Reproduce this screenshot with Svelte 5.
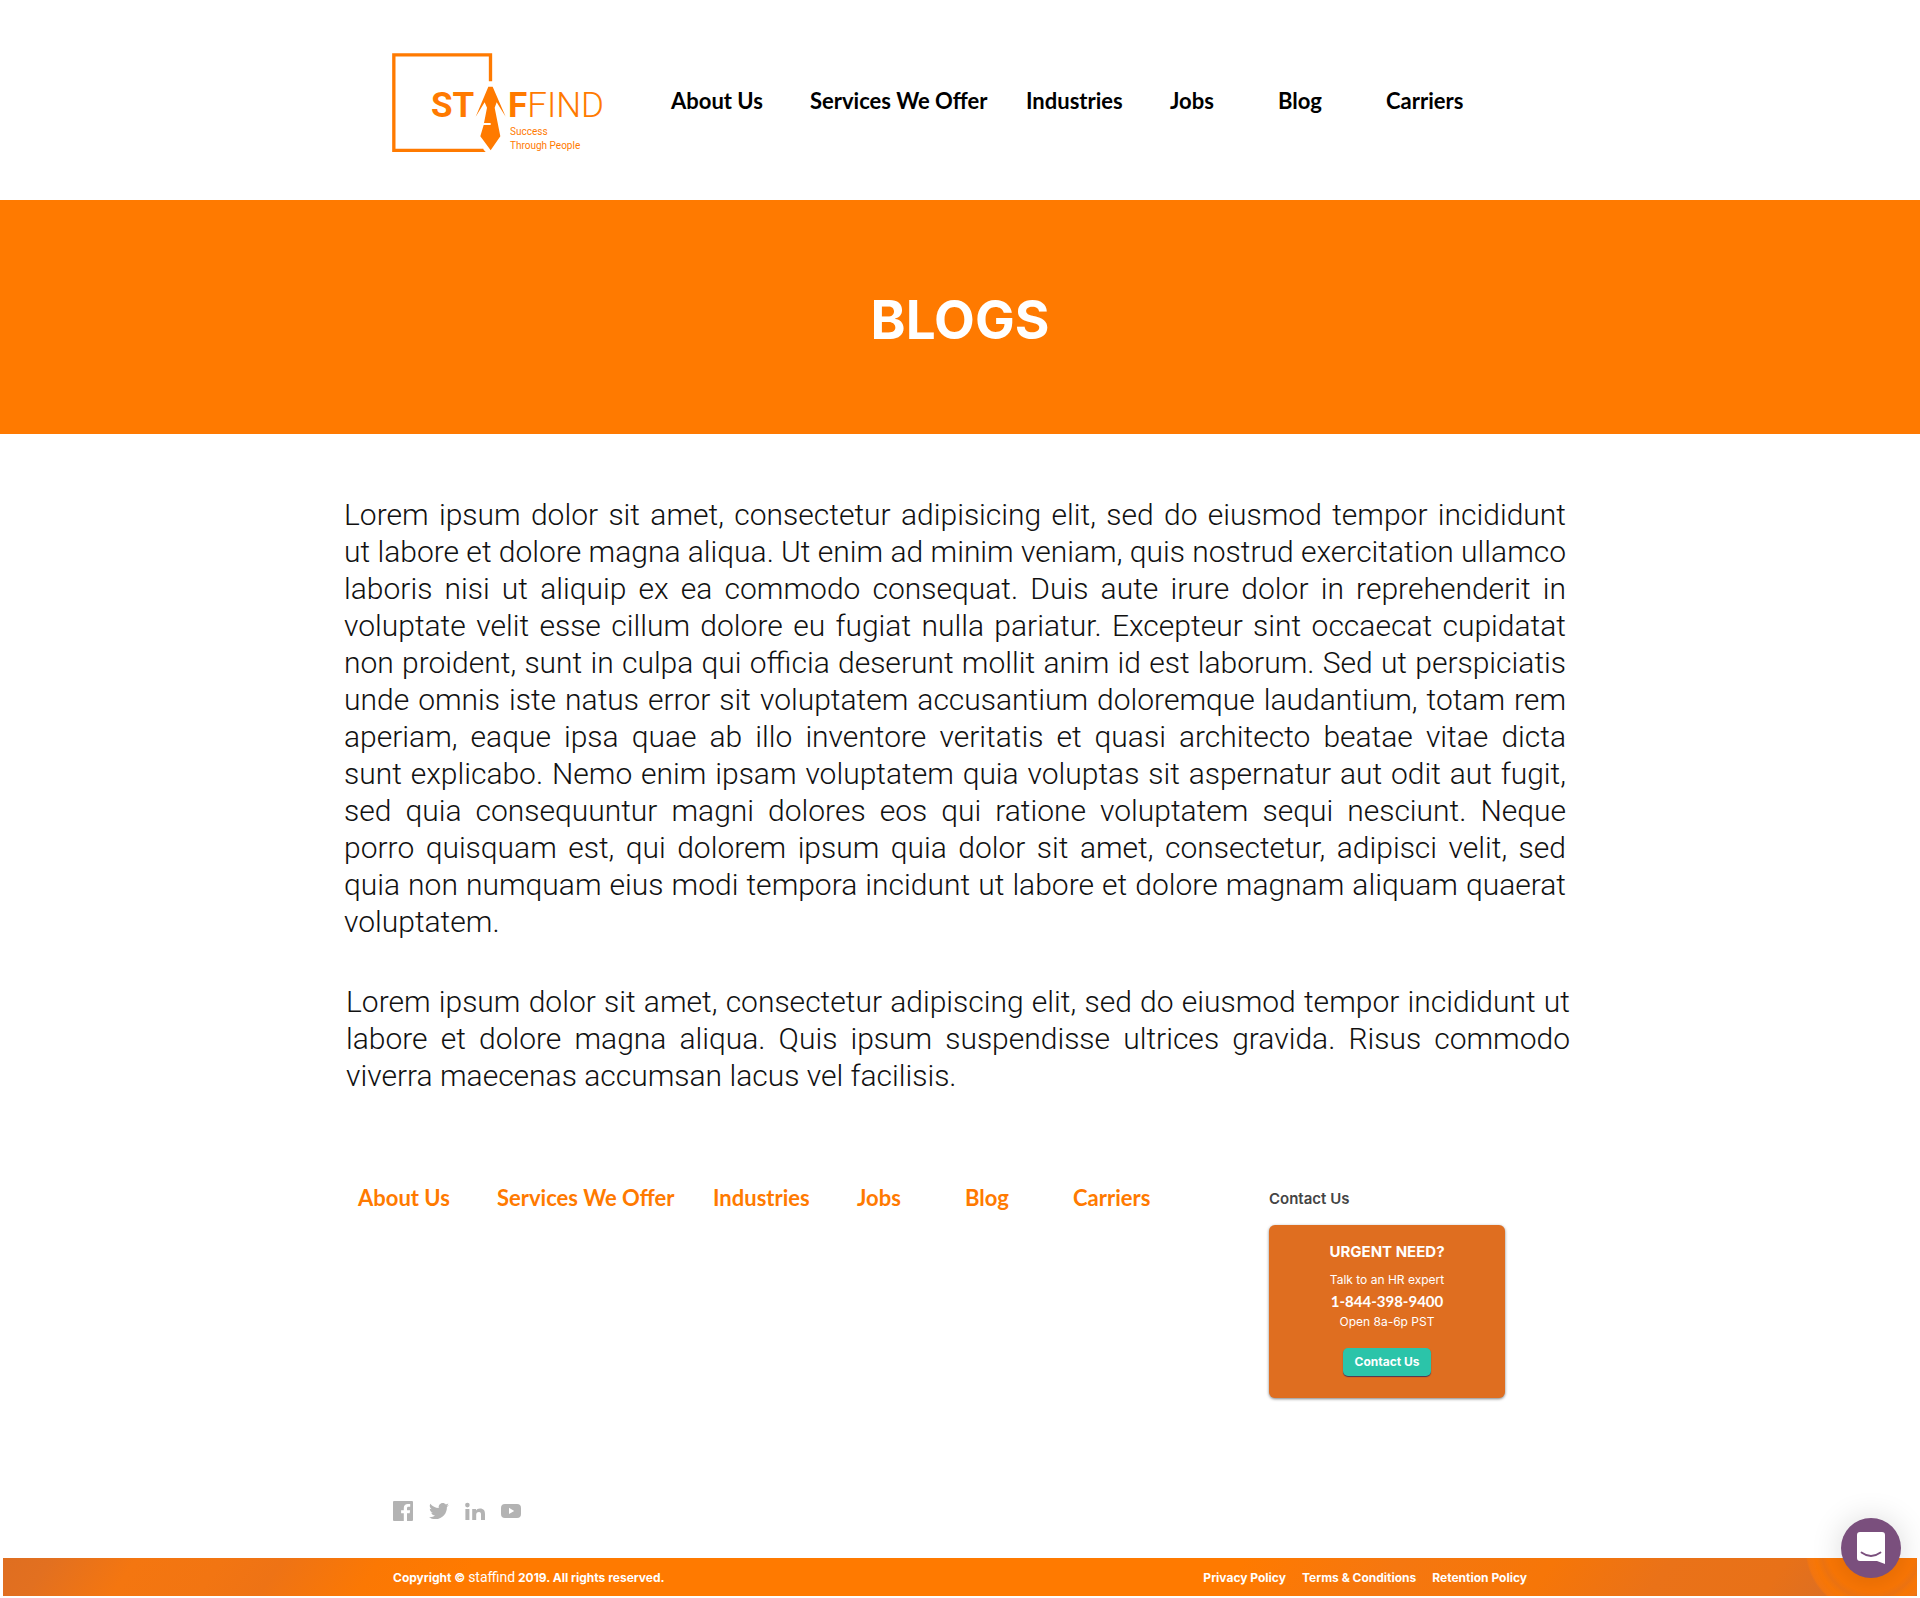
<script>
  const links = ['About Us', 'Services We Offer', 'Industries', 'Jobs', 'Blog', 'Carriers'];
  const legal = ['Privacy Policy', 'Terms & Conditions', 'Retention Policy'];

  const intro = [
    'Lorem ipsum dolor sit amet, consectetur adipisicing elit, sed do eiusmod tempor incididunt',
    'ut labore et dolore magna aliqua. Ut enim ad minim veniam, quis nostrud exercitation ullamco',
    'laboris nisi ut aliquip ex ea commodo consequat. Duis aute irure dolor in reprehenderit in',
    'voluptate velit esse cillum dolore eu fugiat nulla pariatur. Excepteur sint occaecat cupidatat',
    'non proident, sunt in culpa qui officia deserunt mollit anim id est laborum. Sed ut perspiciatis',
    'unde omnis iste natus error sit voluptatem accusantium doloremque laudantium, totam rem',
    'aperiam, eaque ipsa quae ab illo inventore veritatis et quasi architecto beatae vitae dicta',
    'sunt explicabo. Nemo enim ipsam voluptatem quia voluptas sit aspernatur aut odit aut fugit,',
    'sed quia consequuntur magni dolores eos qui ratione voluptatem sequi nesciunt. Neque',
    'porro quisquam est, qui dolorem ipsum quia dolor sit amet, consectetur, adipisci velit, sed',
    'quia non numquam eius modi tempora incidunt ut labore et dolore magnam aliquam quaerat',
    'voluptatem.'
  ];
  const outro = [
    'Lorem ipsum dolor sit amet, consectetur adipiscing elit, sed do eiusmod tempor incididunt ut',
    'labore et dolore magna aliqua. Quis ipsum suspendisse ultrices gravida. Risus commodo',
    'viverra maecenas accumsan lacus vel facilisis.'
  ];

  const social = [
    {
      name: 'Facebook',
      d: 'M1 0H19Q20 0 20 1V19Q20 20 19 20H14V12.3H16.7L17.1 9.2H14V7.3C14 6.4 14.3 5.8 15.6 5.8H17.2V3C16.9 3 16 2.9 14.8 2.9C12.5 2.9 10.8 4.3 10.8 6.9V9.2H8.1V12.3H10.8V20H1Q0 20 0 19V1Q0 0 1 0Z'
    },
    {
      name: 'Twitter',
      d: 'M20 4.1C19.3 4.4 18.5 4.7 17.6 4.8C18.5 4.3 19.1 3.5 19.4 2.5C18.6 3 17.7 3.3 16.8 3.5C16 2.7 15 2.1 13.8 2.1C11.1 2.1 9.2 4.6 9.8 7.1C6.4 6.9 3.3 5.3 1.3 2.8C0.2 4.6 0.8 7 2.6 8.2C1.9 8.2 1.3 8 0.8 7.7C0.7 9.6 2.1 11.3 4 11.7C3.5 11.9 2.8 11.9 2.2 11.8C2.7 13.4 4.2 14.6 6 14.6C4.3 15.9 2.2 16.5 0 16.2C1.8 17.4 4 18.1 6.3 18.1C13.9 18.1 18.2 11.7 17.9 5.9C18.7 5.5 19.4 4.8 20 4.1Z'
    },
    {
      name: 'LinkedIn',
      d: 'M2.4 1.8A2.3 2.3 0 1 1 2.4 6.4A2.3 2.3 0 1 1 2.4 1.8ZM0.4 8H4.4V19H0.4ZM7.2 8H11V9.6C11.7 8.4 13 7.6 14.9 7.6C18.8 7.6 20 9.8 20 13.2V19H16V13.7C16 12 15.6 11.1 14 11.1C12 11.1 11.2 12.3 11.2 14V19H7.2Z'
    },
    {
      name: 'YouTube',
      d: 'M4 3H16Q20 3 20 7V13Q20 17 16 17H4Q0 17 0 13V7Q0 3 4 3ZM8 6.8V13L13.2 9.9Z'
    }
  ];
</script>

{#snippet lines(rows)}
  {#each rows as row, i}<span class="line" class:last={i === rows.length - 1}>{row}</span>{/each}
{/snippet}

{#snippet menu(label, kind)}
  <nav class="menu {kind}" aria-label={label}>
    {#each links as link}<a href="#top">{link}</a>{/each}
  </nav>
{/snippet}

<div class="page" id="top">
  <header class="masthead">
    <a class="logo" href="#top" aria-label="Staffind home">
      <svg viewBox="0 0 210 99" width="210" height="99">
        <g transform="scale(0.33333) translate(-66 -69)">
          <path d="M361.500 154V74.500H71.500V361H340" fill="none" stroke="#ff7a00" stroke-width="10" />
          <path d="M338 356L347 366H338Z" fill="#ff7a00" />
          <path
            d="M355 170H368L407 260L380 217L374 233L391 319L362 361L331 319L341 285H362V279H342L351 233L344 217L317 260Z"
            fill="#ff7a00"
          />
        </g>
        <text class="word heavy" x="39" y="64">ST</text>
        <text class="word" x="116" y="64"><tspan class="heavy">F</tspan>FIND</text>
        <text class="tag" x="118" y="82">Success</text>
        <text class="tag" x="118" y="96">Through People</text>
      </svg>
    </a>
    {@render menu('Main', 'dark')}
  </header>

  <section class="banner"><h1>BLOGS</h1></section>

  <main class="article">
    <p class="intro">{@render lines(intro)}</p>
    <p class="outro">{@render lines(outro)}</p>
  </main>

  <footer>
    <div class="footer-top">
      {@render menu('Footer', 'orange')}
      <section class="contact">
        <h2>Contact Us</h2>
        <div class="card">
          <h3>URGENT NEED?</h3>
          <p>Talk to an HR expert</p>
          <a class="phone" href="tel:18443989400">1-844-398-9400</a>
          <p>Open 8a-6p PST</p>
          <button type="button">Contact Us</button>
        </div>
      </section>
    </div>

    <div class="social">
      {#each social as item}
        <a href="#top" aria-label={item.name}>
          <svg viewBox="0 0 20 20" width="20" height="20"><path d={item.d} fill="#b3b3b3" fill-rule="evenodd" /></svg>
        </a>
      {/each}
    </div>

    <div class="bar">
      <div class="bar-inner">
        <span>Copyright © <span class="brand">staffind</span> 2019. All rights reserved.</span>
        <nav class="legal" aria-label="Legal">
          {#each legal as item}<a href="#top">{item}</a>{/each}
        </nav>
      </div>
    </div>
  </footer>

  <button class="chat" type="button" aria-label="Open chat">
    <svg viewBox="0 0 28 32" width="28" height="32">
      <path d="M3 0H25Q28 0 28 3V32L20 29H3Q0 29 0 26V3Q0 0 3 0Z" fill="#fff" />
      <path d="M4.500 20.500Q14 27.500 23.500 20.500" fill="none" stroke="#7a4f7d" stroke-width="1.800" stroke-linecap="round" />
    </svg>
  </button>
</div>

<style>
  :global(body) {
    margin: 0;
    background: #fff;
  }
  .page {
    font-family: Lato, sans-serif;
    color: #000;
  }
  a {
    color: inherit;
    text-decoration: none;
  }
  h1,
  h2,
  h3,
  p {
    margin: 0;
  }
  svg {
    display: block;
    overflow: visible;
  }

  .masthead {
    display: flex;
    align-items: center;
    gap: 69px;
    max-width: 1136px;
    margin: 0 auto;
    padding: 53px 0 48px;
  }
  .word {
    font: 300 35px Roboto, sans-serif;
    fill: #ff7a00;
  }
  .heavy {
    font-weight: 700;
  }
  .tag {
    font: 400 10px Roboto, sans-serif;
    fill: #ff7a00;
  }
  .menu {
    display: grid;
    grid-template-columns: 139px 216px 144px 108px 108px auto;
    font-size: 22px;
    line-height: 26px;
    font-weight: 700;
    white-space: nowrap;
  }
  .dark {
    padding-bottom: 3px;
  }
  .orange {
    padding-top: 1px;
    color: #ff7a00;
  }

  .banner {
    display: flex;
    justify-content: center;
    padding: 88px 0 82px;
    background: #ff7a00;
    color: #fff;
  }
  h1 {
    font: 700 53px/64px Inter, sans-serif;
  }

  .article {
    max-width: 1232px;
    margin: 0 auto;
    padding: 62px 0 90px;
    font: 300 30px/37px Roboto, sans-serif;
    color: #111;
  }
  .intro {
    margin: 0 10px 43px 0;
  }
  .outro {
    margin: 0 6px 0 2px;
  }
  .line {
    display: block;
    text-align: justify;
    text-align-last: justify;
    white-space: nowrap;
  }
  .last {
    text-align-last: left;
  }

  .footer-top {
    display: flex;
    justify-content: space-between;
    align-items: flex-start;
    max-width: 1147px;
    margin: 0 auto;
    padding: 0 71px 0 14px;
  }
  .contact {
    width: 236px;
    padding-top: 6px;
    font-family: Inter, sans-serif;
  }
  h2 {
    margin-bottom: 17px;
    font-size: 15px;
    line-height: 18px;
    font-weight: 600;
    color: #444;
  }
  .card {
    display: flex;
    flex-direction: column;
    align-items: center;
    padding: 17px 0 22px;
    border-radius: 6px;
    background: #df6e20;
    box-shadow: 0 1px 3px rgba(0, 0, 0, 0.5);
    color: #fff;
    font-size: 12px;
    line-height: 20px;
  }
  h3 {
    margin-bottom: 8px;
    font-size: 15px;
    line-height: 20px;
    font-weight: 700;
  }
  .phone {
    font: 700 15px/22px Lato, sans-serif;
  }
  .card button {
    height: 28px;
    margin-top: 16px;
    padding: 0 12px;
    border: 0;
    border-radius: 5px;
    background: #2bc4a9;
    box-shadow: 0 1px 1px #4b3355;
    color: #fff;
    font: 700 12px/28px Inter, sans-serif;
  }

  .social {
    display: flex;
    gap: 16px;
    max-width: 1134px;
    margin: 103px auto 37px;
  }

  .bar {
    margin: 0 3px;
    padding: 0 16px;
    background:
      radial-gradient(circle at calc(100% - 46px) -10px, #fb7705 44px, #ee7412 50px, #f87706 56px, #f27510 64px, transparent 66px),
      linear-gradient(125deg, #df6e20 0, #e27020 40px, #f47610 110px, #f27512 180px, #ee7315 230px, #fb7804 310px, #ff7a00 390px, #ff7a00 64%, #f57710 72%, #f67608 80%, #ea7218 86%, #e87118 92%, #d76e28 97%);
    color: #fff;
    font: 700 12px/40px Inter, sans-serif;
  }
  .bar-inner {
    display: flex;
    justify-content: space-between;
    max-width: 1134px;
    height: 38px;
    margin: 0 auto;
  }
  .brand {
    font: 400 14px Roboto, sans-serif;
  }
  .legal {
    display: flex;
    gap: 16px;
  }

  .chat {
    position: fixed;
    right: 19px;
    bottom: 20px;
    display: flex;
    align-items: center;
    justify-content: center;
    width: 60px;
    height: 60px;
    padding: 0;
    border: 0;
    border-radius: 50%;
    background: #7a4f7d;
    box-shadow: 0 2px 32px rgba(0, 0, 0, 0.16);
  }
</style>
